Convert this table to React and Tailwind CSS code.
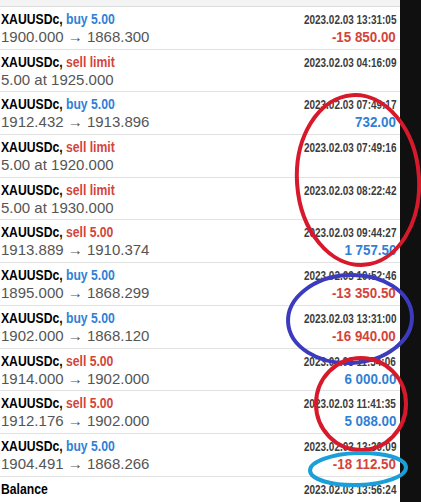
const BLUE = 'text-[#2f7fd6]';
const RED = 'text-[#d4443a]';

const rows = [
  { side: 'buy 5.00', sub: '1900.000 → 1868.300', time: '2023.02.03 13:31:05', profit: '-15 850.00' },
  { side: 'sell limit', sub: '5.00 at 1925.000', time: '2023.02.03 04:16:09' },
  { side: 'buy 5.00', sub: '1912.432 → 1913.896', time: '2023.02.03 07:49:17', profit: '732.00' },
  { side: 'sell limit', sub: '5.00 at 1920.000', time: '2023.02.03 07:49:16' },
  { side: 'sell limit', sub: '5.00 at 1930.000', time: '2023.02.03 08:22:42' },
  { side: 'sell 5.00', sub: '1913.889 → 1910.374', time: '2023.02.03 09:44:27', profit: '1 757.50' },
  { side: 'buy 5.00', sub: '1895.000 → 1868.299', time: '2023.02.03 10:52:46', profit: '-13 350.50' },
  { side: 'buy 5.00', sub: '1902.000 → 1868.120', time: '2023.02.03 13:31:00', profit: '-16 940.00' },
  { side: 'sell 5.00', sub: '1914.000 → 1902.000', time: '2023.02.03 11:54:06', profit: '6 000.00' },
  { side: 'sell 5.00', sub: '1912.176 → 1902.000', time: '2023.02.03 11:41:35', profit: '5 088.00' },
  { side: 'buy 5.00', sub: '1904.491 → 1868.266', time: '2023.02.03 13:30:09', profit: '-18 112.50' },
];

const Row = ({ side, sub, time, profit }) => {
  const sideColor = side.startsWith('buy') ? BLUE : RED;
  const profitColor = profit && profit.startsWith('-') ? RED : BLUE;
  return (
    <div className="h-[42.7px] shrink-0 border-b border-[#e2e2e2] flex justify-between pl-px pr-1">
      <div className="flex flex-col">
        <div className="h-[21px] leading-[21px] pt-px">
          <span className="inline-block origin-left scale-x-[0.87] whitespace-nowrap text-[14px] font-bold text-black">
            XAUUSDc, <span className={sideColor}>{side}</span>
          </span>
        </div>
        <div className="text-[15px] leading-[18px] text-[#555] whitespace-nowrap">{sub}</div>
      </div>
      <div className="flex flex-col items-end">
        <div className="h-[21px] leading-[21px] pt-px">
          <span className="inline-block origin-right scale-x-[0.83] whitespace-nowrap text-[12px] font-bold text-[#3c3c3c]">
            {time}
          </span>
        </div>
        {profit && (
          <div className="leading-[18px]">
            <span className={`inline-block origin-right scale-x-[0.89] whitespace-nowrap text-[15px] font-bold ${profitColor}`}>
              {profit}
            </span>
          </div>
        )}
      </div>
    </div>
  );
};

export default function App() {
  return (
    <div className="relative w-[421px] h-[502px] overflow-hidden flex font-['Liberation_Sans',Arial,sans-serif]">
      <div className="w-[400px] bg-white flex flex-col">
        <div className="h-[7px] shrink-0 bg-[#f4f4f4] border-b border-[#dcdcdc]" />
        {rows.map((r, i) => (
          <Row key={i} {...r} />
        ))}
        <div className="h-[42.7px] shrink-0 flex justify-between pl-px pr-1">
          <div className="h-[21px] leading-[21px] pt-px">
            <span className="inline-block origin-left scale-x-[0.87] text-[14px] font-bold text-black">Balance</span>
          </div>
          <div className="h-[21px] leading-[21px] pt-px">
            <span className="inline-block origin-right scale-x-[0.83] whitespace-nowrap text-[12px] font-bold text-[#3c3c3c]">
              2023.02.03 13:56:24
            </span>
          </div>
        </div>
      </div>
      <div className="flex-1 bg-[#101010]" />

      <svg className="absolute inset-0 pointer-events-none" width="421" height="502" viewBox="0 0 421 502" fill="none">
        <ellipse cx="358" cy="180" rx="61" ry="85" stroke="#d71a2b" strokeWidth="4" transform="rotate(-4 358 180)" />
        <ellipse cx="350" cy="319" rx="62" ry="44" stroke="#3c3bbd" strokeWidth="4" transform="rotate(-3 350 319)" />
        <ellipse cx="361" cy="404" rx="45" ry="46" stroke="#d71a2b" strokeWidth="4" />
        <ellipse cx="358" cy="469" rx="48" ry="16" stroke="#1a9fd8" strokeWidth="4" transform="rotate(-2 358 469)" />
      </svg>
    </div>
  );
}
